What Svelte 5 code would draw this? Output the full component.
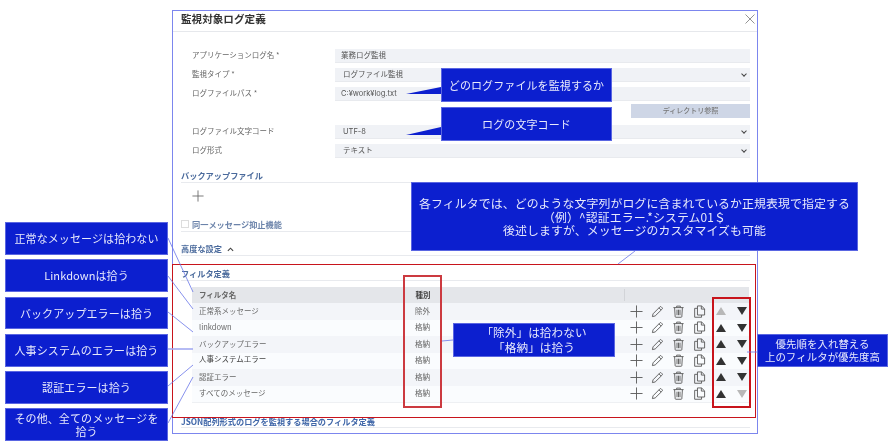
<script>
  const fields = [
    { label: 'アプリケーションログ名 *', value: '業務ログ監視', kind: 'text' },
    { label: '監視タイプ *', value: 'ログファイル監視', kind: 'select' },
    { label: 'ログファイルパス *', value: 'C:¥work¥log.txt', kind: 'text' }
  ];
  const fields2 = [
    { label: 'ログファイル文字コード', value: 'UTF-8', kind: 'select' },
    { label: 'ログ形式', value: 'テキスト', kind: 'select' }
  ];
  const rows = [
    { name: '正常系メッセージ', type: '除外' },
    { name: 'linkdown', type: '格納' },
    { name: 'バックアップエラー', type: '格納' },
    { name: '人事システムエラー', type: '格納', dark: true },
    { name: '認証エラー', type: '格納' },
    { name: 'すべてのメッセージ', type: '格納' }
  ];
  const notes = [
    ['正常なメッセージは拾わない'],
    ['Linkdownは拾う'],
    ['バックアップエラーは拾う'],
    ['人事システムのエラーは拾う'],
    ['認証エラーは拾う'],
    ['その他、全てのメッセージを', '拾う']
  ];
  const leaders = [
    [168, 238, 193, 292],
    [168, 276, 193, 309],
    [168, 312, 193, 332],
    [168, 386, 193, 365],
    [168, 423, 193, 377],
    [635, 251, 618, 264],
    [442, 341, 453, 340],
    [747, 352, 757, 352]
  ];
</script>

{#snippet plus()}
  <svg class="ico" viewBox="0 0 14 14"><path d="M7 .5v13M.5 7h13" /></svg>
{/snippet}
{#snippet pencil()}
  <svg class="ico" viewBox="0 0 14 14"><path d="M1.5 12.5l.7-3L9.6 2a1 1 0 0 1 1.4 0l1 1a1 1 0 0 1 0 1.4L4.5 11.8zM8.6 3.1l2.3 2.3" /></svg>
{/snippet}
{#snippet trash()}
  <svg class="ico" viewBox="0 0 14 14"><path d="M1.5 2.8h11M5 2.6V1.2h4v1.4M2.8 3l.6 9.5a.8.8 0 0 0 .8.7h5.6a.8.8 0 0 0 .8-.7L11.2 3M5.4 5v6M7 5v6M8.6 5v6" /></svg>
{/snippet}
{#snippet copy()}
  <svg class="ico" viewBox="0 0 14 14"><path d="M4.8 1h4.4l3.3 3.2v6.6H4.8zM9 1.1v3.3h3.4M4.8 3.6H1.8v9.6h7.4v-2.4" /></svg>
{/snippet}

<div class="stage">
  <section class="dialog">
    <header class="title">
      <h1>監視対象ログ定義</h1>
      <svg class="close" viewBox="0 0 10 10"><path d="M.5.5l9 9M9.5.5l-9 9" /></svg>
    </header>

    <div class="form">
      {#each fields as f}
        <div class="row">
          <span class="label">{f.label}</span>
          <div class="field" class:select={f.kind === 'select'}>{f.value}</div>
        </div>
      {/each}
      <div class="btnrow"><span class="browse">ディレクトリ参照</span></div>
      {#each fields2 as f}
        <div class="row">
          <span class="label">{f.label}</span>
          <div class="field" class:select={f.kind === 'select'}>{f.value}</div>
        </div>
      {/each}
    </div>

    <h2 class="sec backup">バックアップファイル</h2>
    <div class="addrow">{@render plus()}</div>
    <div class="sec check"><span class="box"></span>同一メッセージ抑止機能</div>
    <h2 class="sec adv">高度な設定 <svg class="caret" viewBox="0 0 8 5"><path d="M1 4l3-3 3 3" /></svg></h2>
    <h2 class="sec filt">フィルタ定義</h2>

    <div class="table">
      <div class="thead">
        <span class="cname">フィルタ名</span>
        <span class="ctype">種別</span>
        <span class="cact"></span>
      </div>
      {#each rows as r, i}
        <div class="tr" class:odd={i % 2 === 0}>
          <span class="cname" class:dark={r.dark}>{r.name}</span>
          <span class="ctype">{r.type}</span>
          <span class="spacer"></span>
          <span class="cell">{@render plus()}</span>
          <span class="cell">{@render pencil()}</span>
          <span class="cell">{@render trash()}</span>
          <span class="cell">{@render copy()}</span>
          <span class="cell"><i class="up" class:off={i === 0}></i></span>
          <span class="cell last"><i class="down" class:off={i === rows.length - 1}></i></span>
        </div>
      {/each}
    </div>

    <h2 class="sec json">JSON配列形式のログを監視する場合のフィルタ定義</h2>
  </section>

  <div class="redbox rb-filter"></div>
  <div class="redbox rb-type"></div>
  <div class="redbox rb-order"></div>

  <svg class="leaders" viewBox="0 0 890 445">
    {#each leaders as l}
      <line x1={l[0]} y1={l[1]} x2={l[2]} y2={l[3]} />
    {/each}
    <line class="thick" x1="168" y1="349" x2="193" y2="349" />
    <polygon class="tail" points="441,87 406,94 441,94" />
    <polygon class="tail" points="441,127 406,135 441,135" />
  </svg>

  <div class="leftnotes">
    {#each notes as n}
      <div class="note">{#each n as line}<span>{line}</span>{/each}</div>
    {/each}
  </div>

  <div class="note c1">どのログファイルを監視するか</div>
  <div class="note c2">ログの文字コード</div>
  <div class="note c3">
    <span>各フィルタでは、どのような文字列がログに含まれているか正規表現で指定する</span>
    <span>（例）^認証エラー.*システム01＄</span>
    <span>後述しますが、メッセージのカスタマイズも可能</span>
  </div>
  <div class="note c4"><span>「除外」は拾わない</span><span>「格納」は拾う</span></div>
  <div class="note c5"><span>優先順を入れ替える</span><span>上のフィルタが優先度高</span></div>
</div>

<style>
  :global(body) { margin: 0; background: #fff; }
  .stage {
    position: relative; width: 890px; height: 445px; overflow: hidden; background: #fff;
    font-family: "Noto Sans CJK JP", "Noto Sans", sans-serif; color: #555;
    filter: blur(0.3px);
  }
  .dialog {
    box-sizing: border-box; width: 586px; height: 424px; margin: 10px 0 0 172px;
    border: 1px solid #7c86ee; padding: 0 7px 0 8px; overflow: hidden;
  }
  .title {
    box-sizing: border-box; display: flex; align-items: center; justify-content: space-between; height: 21px;
    margin: 0 -7px 0 -8px; padding: 0 2px 4px 8px; border-bottom: 1px solid #e6e8ec;
  }
  h1 { margin: 0; font-size: 10.6px; font-weight: 700; color: #333; line-height: 16px; }
  .close { width: 10px; height: 10px; fill: none; stroke: #777; stroke-width: .8; }
  .form { margin-top: 17px; padding-left: 11px; display: flex; flex-direction: column; gap: 5px; }
  .row { display: grid; grid-template-columns: 143px 415px; height: 14px; align-items: center; }
  .label { font-size: 7.5px; color: #666; line-height: 14px; margin-top: -3px; }
  .field {
    box-sizing: border-box; height: 14px; background: #f0f2f6; border-bottom: 1px solid #e8eaee;
    font-family: Inter, "Noto Sans CJK JP", sans-serif;
    font-size: 7.5px; line-height: 13.5px; color: #555; padding-left: 6px; position: relative;
  }
  .field.select { padding-left: 8px; }
  .field.select::after {
    content: ''; position: absolute; right: 4px; top: 3.5px; width: 3px; height: 3px;
    border: solid #444; border-width: 0 1px 1px 0; transform: rotate(45deg);
  }
  .btnrow { display: flex; justify-content: flex-end; margin: -2px 7px 2px 0; width: 558px; }
  .browse {
    width: 119px; height: 14px; background: #ced6e6; color: #777; font-size: 7px;
    line-height: 13px; text-align: center; font-weight: 500;
  }
  .sec {
    margin: 0; font-size: 8.2px; font-weight: 700; color: #4a6a9c; line-height: 14px;
    border-bottom: 1px solid #e8eaee;
  }
  .backup { margin-top: 10px; height: 14px; }
  .addrow { box-sizing: border-box; height: 31px; padding: 0 0 6px 11px; display: flex; align-items: center; margin-top: 0; }
  .addrow .ico { width: 12px; height: 12px; stroke: #666; }
  .check { display: flex; align-items: center; gap: 3px; height: 15px; margin-top: 2px; color: #6b83aa; }
  .box { width: 6px; height: 6px; border: 1px solid #ddd; }
  .adv { margin-top: 9px; height: 14px; }
  .caret { width: 7px; height: 5px; fill: none; stroke: #444; stroke-width: 1.3; margin-left: 3px; }
  .filt { margin-top: 10px; height: 14px; }
  .table { margin: 6px 0 0 11px; width: 557px; border-bottom: 1px solid #eef0f3; }
  .thead, .tr {
    display: grid; grid-template-columns: 212px 37px 1fr repeat(5, 21.2px) 17.6px; align-items: center;
  }
  .thead { height: 16px; background: #e4e6ea; grid-template-columns: 212px 37px 1fr; color: #333; font-weight: 700; font-size: 7.5px; }
  .thead .ctype { color: #444; border-left: 1px solid #f0f1f3; height: 12px; line-height: 12px; padding-bottom: 0; }
  .thead .cact { height: 12px; position: relative; }
  .thead .cact::before { content: ''; position: absolute; left: 183px; top: 0; height: 12px; width: 1px; background: #d2d4d8; }
  .tr { height: 16.5px; font-size: 7.5px; background: #fafcfe; }
  .tr.odd { background: #f3f5f9; }
  .cname { padding: 0 0 2px 7px; color: #666; }
  .cname.dark { color: #444; margin-top: -3px; }
  .ctype { text-align: center; color: #666; padding-bottom: 2px; }
  .cell { display: flex; justify-content: center; align-items: center; }
  .cell.last { justify-content: flex-start; padding-left: 5.6px; }
  .ico { width: 13px; height: 13px; fill: none; stroke: #5c5c5c; stroke-width: 1; }
  .up, .down { display: block; width: 0; height: 0; border-left: 5px solid transparent; border-right: 5px solid transparent; }
  .up { border-bottom: 8px solid #333; }
  .down { border-top: 8px solid #333; }
  .up.off { border-bottom-color: #b8b8b8; }
  .down.off { border-top-color: #b8b8b8; }
  .json { margin-top: 11px; height: 13px; color: #3f66a8; }

  .redbox { position: absolute; box-sizing: border-box; border: 1px solid #c8141c; }
  .rb-filter { left: 172px; top: 264px; width: 584px; height: 154px; }
  .rb-type { left: 403px; top: 275px; width: 39px; height: 133px; border: 2px solid #cc3a40; }
  .rb-order { left: 712px; top: 297px; width: 39px; height: 111px; border: 2px solid #c8141c; }

  .leaders { position: absolute; inset: 0; width: 890px; height: 445px; pointer-events: none; }
  .leaders line { stroke: #6a76e8; stroke-width: .8; }
  .leaders .thick { stroke: #a3aaf2; stroke-width: 1.6; }
  .tail { fill: #0c1fcf; }

  .leftnotes { position: absolute; left: 5px; top: 222px; width: 163px; display: flex; flex-direction: column; gap: 4.4px; }
  .note {
    box-sizing: border-box; background: #0c1fcf; color: #e8eafc; border: 1px solid #5a66e2;
    display: flex; flex-direction: column; align-items: center; justify-content: center;
    text-align: center; font-size: 11px; line-height: 13px; letter-spacing: .1px;
  }
  .leftnotes .note { height: 32.9px; }
  .c1, .c2, .c3, .c4, .c5 { position: absolute; }
  .c1 { left: 441px; top: 68px; width: 171px; height: 34px; }
  .c2 { left: 441px; top: 107px; width: 171px; height: 34px; }
  .c3 { left: 411px; top: 182px; width: 447px; height: 69px; font-size: 11.9px; line-height: 13.7px; }
  .c4 { left: 453px; top: 323px; width: 162px; height: 34px; line-height: 15px; font-size: 11.6px; }
  .c5 { left: 757px; top: 334px; width: 131px; height: 33px; font-size: 10.4px; line-height: 12.5px; }
</style>
